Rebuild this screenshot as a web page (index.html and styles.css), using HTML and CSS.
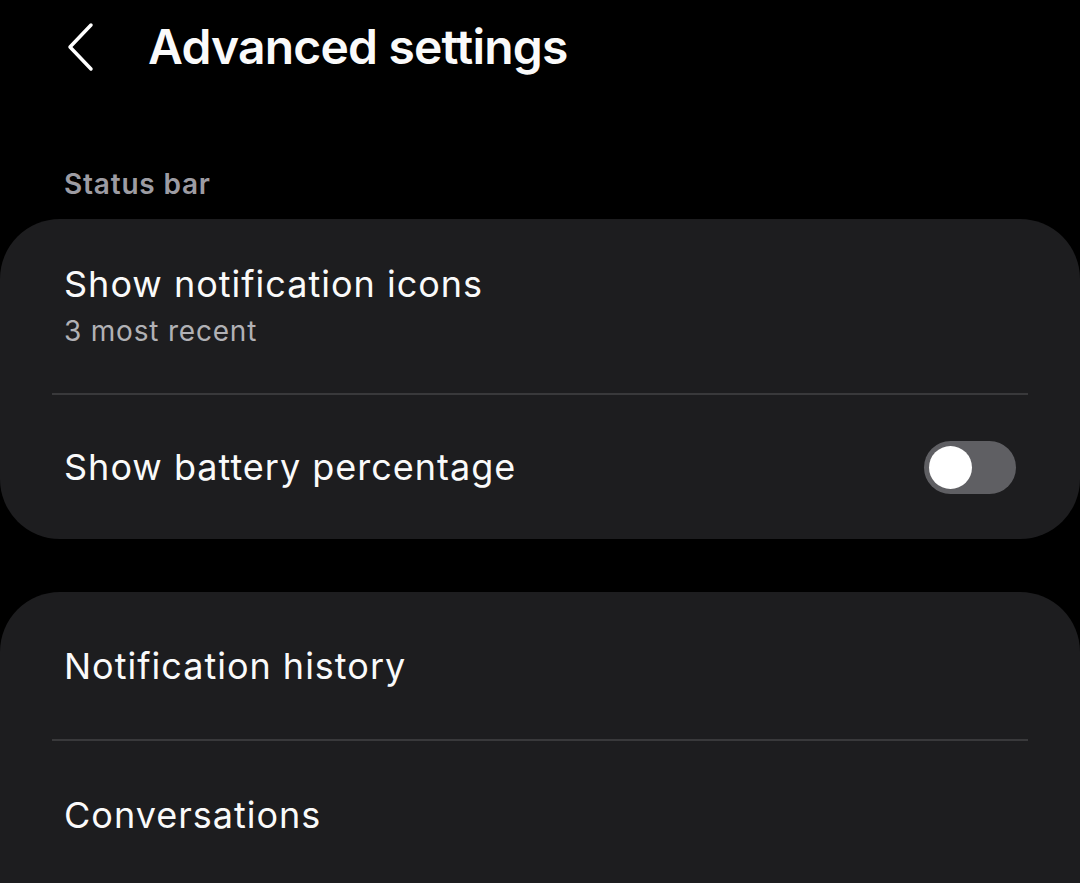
FILE: index.html
```html
<!DOCTYPE html>
<html>
<head>
<meta charset="utf-8">
<link rel="stylesheet" href="styles.css">
</head>
<body>
<div class="page">
  <header class="topbar">
    <svg class="back" width="40" height="52" viewBox="0 0 40 52"><polyline points="27,4 6,26 27,48" fill="none" stroke="#fff" stroke-width="3.5" stroke-linecap="round" stroke-linejoin="round"/></svg>
    <h1 class="title">Advanced settings</h1>
  </header>
  <div class="section-label">Status bar</div>
  <div class="card">
    <div class="row row-two">
      <div class="row-title">Show notification icons</div>
      <div class="row-sub">3 most recent</div>
    </div>
    <div class="divider"></div>
    <div class="row row-toggle">
      <div class="row-title">Show battery percentage</div>
      <div class="toggle"><div class="knob"></div></div>
    </div>
  </div>
  <div class="card card2">
    <div class="row row-single">
      <div class="row-title">Notification history</div>
    </div>
    <div class="divider"></div>
    <div class="row row-single">
      <div class="row-title">Conversations</div>
    </div>
  </div>
</div>
</body>
</html>
```
FILE: styles.css
```css
html, body {
  margin: 0;
  padding: 0;
  background: #000;
  width: 1080px;
  height: 883px;
  overflow: hidden;
}
body {
  font-family: Inter, Roboto, "Noto Sans", sans-serif;
  color: #fafafa;
}
.page {
  display: flex;
  flex-direction: column;
}
.topbar {
  height: 92px;
  display: flex;
  align-items: center;
  padding-left: 64px;
}
.back {
  display: block;
  margin-right: 44px;
  margin-top: 2px;
}
.title {
  margin: 0;
  font-size: 48px;
  font-weight: 600;
  letter-spacing: -0.8px;
}
.section-label {
  margin-top: 72px;
  padding-left: 64px;
  font-size: 28px;
  font-weight: 600;
  letter-spacing: 0.8px;
  color: #9d9ca3;
  height: 55px;
  line-height: 40px;
}
.card {
  background: #1d1d1f;
  border-radius: 60px;
  height: 320px;
  display: flex;
  flex-direction: column;
}
.card2 {
  margin-top: 53px;
  height: 360px;
}
.row {
  padding: 0 64px;
  display: flex;
}
.row-two {
  flex-direction: column;
  height: 174px;
  justify-content: center;
}
.row-title {
  font-size: 36px;
  letter-spacing: 1px;
  line-height: 44px;
}
.row-sub {
  font-size: 28px;
  letter-spacing: 0.8px;
  color: #b1b1b5;
  line-height: 38px;
  margin-top: 6px;
}
.divider {
  height: 2px;
  background: #39393b;
  margin: 0 52px;
}
.row-toggle {
  height: 144px;
  align-items: center;
  justify-content: space-between;
  padding-right: 64px;
}
.toggle {
  width: 92px;
  height: 53px;
  border-radius: 27px;
  background: #5f5f63;
  display: flex;
  align-items: center;
  padding-left: 5px;
  box-sizing: border-box;
}
.knob {
  width: 43px;
  height: 43px;
  border-radius: 50%;
  background: #fff;
}
.row-single {
  height: 147px;
  align-items: center;
}
```
